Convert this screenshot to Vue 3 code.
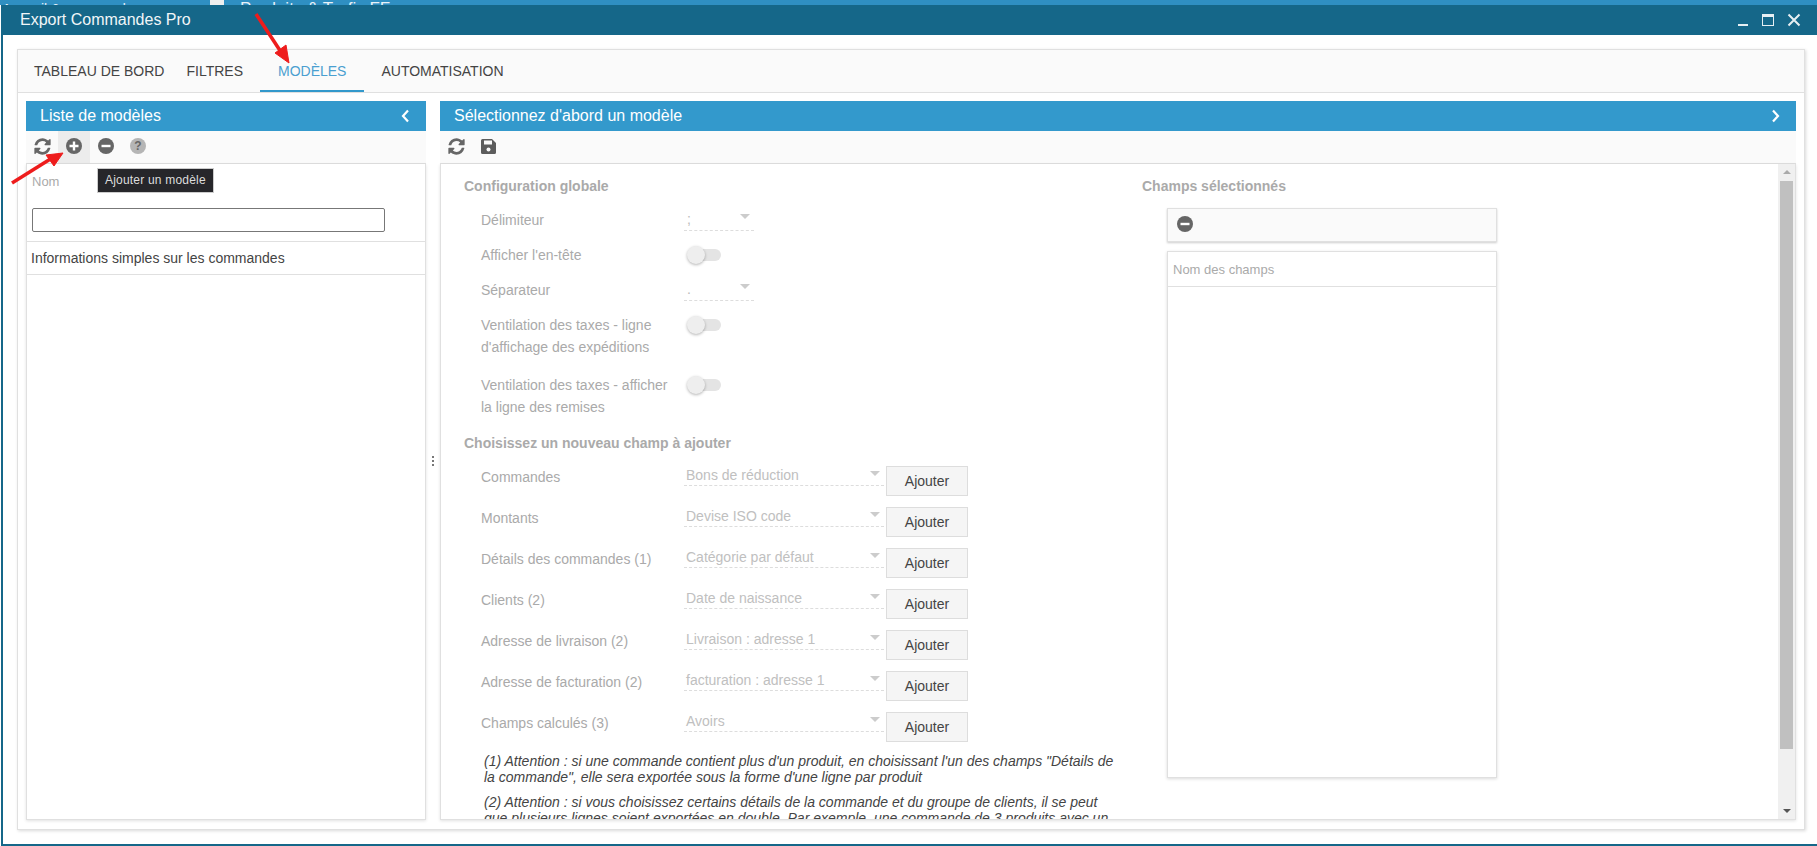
<script setup>
const fields = [
  { label: 'Commandes', value: 'Bons de réduction' },
  { label: 'Montants', value: 'Devise ISO code' },
  { label: 'Détails des commandes (1)', value: 'Catégorie par défaut' },
  { label: 'Clients (2)', value: 'Date de naissance' },
  { label: 'Adresse de livraison (2)', value: 'Livraison : adresse 1' },
  { label: 'Adresse de facturation (2)', value: 'facturation : adresse 1' },
  { label: 'Champs calculés (3)', value: 'Avoirs' },
]
const refreshPath = 'M1639 1056q0 5-1 7-64 268-268 434.5t-478 166.5q-146 0-282.500-55t-243.500-157l-129 129q-19 19-45 19t-45-19-19-45v-448q0-26 19-45t45-19h448q26 0 45 19t19 45-19 45l-137 137q71 66 161 102t187 36q134 0 250-65t186-179q11-17 53-117 8-23 30-23h192q13 0 22.500 9.500t9.500 22.500zm25-800v448q0 26-19 45t-45 19h-448q-26 0-45-19t-19-45 19-45l138-138q-148-137-349-137-134 0-250 65t-186 179q-11 17-53 117-8 23-30 23h-199q-13 0-22.500-9.500t-9.500-22.500v-7q65-268 270-434.500t480-166.500q146 0 284 55.500t245 156.500l130-129q19-19 45-19t45 19 19 45z'
</script>

<template>
  <div class="screen">
    <div class="backdrop">
      <span class="back-text first">Accueil &amp; commandes</span>
      <span class="back-tab"></span>
      <span class="back-text second">Produits &amp; Trafic FF</span>
    </div>
    <div class="window">
      <header class="titlebar">
        <span class="win-title">Export Commandes Pro</span>
        <div class="win-controls">
          <svg width="12" height="14" viewBox="0 0 12 14"><rect x="1" y="11" width="10" height="2" fill="#e6eff3" /></svg>
          <svg width="14" height="14" viewBox="0 0 14 14"><rect x="1.500" y="1.500" width="11" height="11" fill="none" stroke="#e6eff3" /><rect x="1" y="1" width="12" height="3" fill="#e6eff3" /></svg>
          <svg width="14" height="14" viewBox="0 0 14 14"><path d="M1.500 1.500 12.500 12.500M12.500 1.500 1.500 12.500" stroke="#e6eff3" stroke-width="2" /></svg>
        </div>
      </header>

      <div class="win-body">
        <div class="outer">
          <nav class="tabs">
            <a class="tab first-tab">Tableau de bord</a>
            <a class="tab second-tab">Filtres</a>
            <a class="tab active">Modèles</a>
            <a class="tab">Automatisation</a>
          </nav>

          <div class="panels">
            <section class="panel left">
              <div class="panel-head">
                <span>Liste de modèles</span>
                <svg class="chev" width="9" height="14" viewBox="0 0 9 14"><path d="M7 1.500 2 7l5 5.500" fill="none" stroke="#fff" stroke-width="2.200" /></svg>
              </div>
              <div class="toolbar">
                <button class="tool">
                  <svg width="19" height="19" viewBox="0 0 1792 1792"><path :d="refreshPath" fill="#666" /></svg>
                </button>
                <button class="tool hovered">
                  <svg width="16" height="16" viewBox="0 0 16 16"><circle cx="8" cy="8" r="8" fill="#666" /><path d="M8 3.500v9M3.500 8h9" stroke="#fff" stroke-width="2.400" /></svg>
                </button>
                <button class="tool">
                  <svg width="16" height="16" viewBox="0 0 16 16"><circle cx="8" cy="8" r="8" fill="#666" /><path d="M3.500 8h9" stroke="#fff" stroke-width="2.400" /></svg>
                </button>
                <button class="tool">
                  <span class="help">?</span>
                </button>
              </div>
              <div class="list-body">
                <div class="list-filter">
                  <div class="list-label">Nom</div>
                  <div class="fake-input"></div>
                </div>
                <div class="list-row">Informations simples sur les commandes</div>
              </div>
              <div class="tooltip">Ajouter un modèle</div>
            </section>

            <div class="gutter"><i></i><i></i><i></i></div>

            <section class="panel right">
              <div class="panel-head">
                <span>Sélectionnez d'abord un modèle</span>
                <svg class="chev" width="9" height="14" viewBox="0 0 9 14"><path d="M2 1.500 7 7l-5 5.500" fill="none" stroke="#fff" stroke-width="2.200" /></svg>
              </div>
              <div class="toolbar">
                <button class="tool">
                  <svg width="19" height="19" viewBox="0 0 1792 1792"><path :d="refreshPath" fill="#666" /></svg>
                </button>
                <button class="tool">
                  <svg width="15" height="15" viewBox="0 0 15 15"><path d="M1.500 0H11l4 4v9.500a1.500 1.500 0 0 1-1.500 1.500h-12A1.500 1.500 0 0 1 0 13.500v-12A1.500 1.500 0 0 1 1.500 0z" fill="#5c5c5c" /><rect x="3" y="1.500" width="8" height="4" fill="#fafafa" /><circle cx="7.500" cy="10.500" r="2" fill="#fafafa" /></svg>
                </button>
              </div>
              <div class="content">
                <div class="scroll-area">
                  <div class="form-col">
                    <h3>Configuration globale</h3>
                    <div class="cfg-row">
                      <label>Délimiteur</label>
                      <div class="mini-select"><span>;</span><b class="caret"></b></div>
                    </div>
                    <div class="cfg-row">
                      <label>Afficher l'en-tête</label>
                      <div class="toggle"><i></i></div>
                    </div>
                    <div class="cfg-row">
                      <label>Séparateur</label>
                      <div class="mini-select"><span>.</span><b class="caret"></b></div>
                    </div>
                    <div class="cfg-row tall">
                      <label>Ventilation des taxes - ligne d'affichage des expéditions</label>
                      <div class="toggle"><i></i></div>
                    </div>
                    <div class="cfg-row tall">
                      <label>Ventilation des taxes - afficher la ligne des remises</label>
                      <div class="toggle"><i></i></div>
                    </div>

                    <h3 class="second-head">Choisissez un nouveau champ à ajouter</h3>
                    <div v-for="f in fields" :key="f.label" class="field-row">
                      <label>{{ f.label }}</label>
                      <div class="wide-select"><span>{{ f.value }}</span><b class="caret"></b></div>
                      <button class="add">Ajouter</button>
                    </div>

                    <p class="note first-note">(1) Attention : si une commande contient plus d'un produit, en choisissant l'un des champs "Détails de la commande", elle sera exportée sous la forme d'une ligne par produit</p>
                    <p class="note">(2) Attention : si vous choisissez certains détails de la commande et du groupe de clients, il se peut que plusieurs lignes soient exportées en double. Par exemple, une commande de 3 produits avec un client appartenant à plusieurs groupes</p>
                  </div>

                  <div class="fields-col">
                    <h3>Champs sélectionnés</h3>
                    <div class="fields-tools">
                      <svg width="16" height="16" viewBox="0 0 16 16"><circle cx="8" cy="8" r="8" fill="#666" /><path d="M3.500 8h9" stroke="#fff" stroke-width="2.400" /></svg>
                    </div>
                    <div class="fields-grid">
                      <div class="fields-head">Nom des champs</div>
                    </div>
                  </div>
                </div>
                <div class="scrollbar">
                  <b class="sb-up"></b>
                  <div class="sb-thumb"></div>
                  <b class="sb-down"></b>
                </div>
              </div>
            </section>
          </div>
        </div>
      </div>
    </div>

    <svg class="annotations" width="1817" height="846" viewBox="0 0 1817 846">
      <path d="M256 14 281 52" stroke="#ee1c1c" stroke-width="3.500" />
      <path d="M275 53 289 63 286 45z" fill="#ee1c1c" stroke="#ee1c1c" stroke-width="1" />
      <path d="M12 183 52 158" stroke="#ee1c1c" stroke-width="3.500" />
      <path d="M63 153 46 155 54 166z" fill="#ee1c1c" stroke="#ee1c1c" stroke-width="1" />
    </svg>
  </div>
</template>

<style>
html, body { margin: 0; overflow: hidden; background: #fff; }
</style>

<style scoped>
.screen {
  position: relative;
  width: 1817px;
  height: 846px;
  overflow: hidden;
  font-family: "Liberation Sans", Arial, sans-serif;
  font-size: 14px;
  color: #444;
  background: #fff;
}
.backdrop {
  height: 5px;
  background: #2f8fc2;
  display: flex;
  overflow: hidden;
  color: #e8f2f8;
  line-height: 16px;
}
.back-text { margin-top: 1px; white-space: nowrap; }
.back-text.first { margin-left: 2px; width: 208px; font-size: 14px; }
.back-tab { width: 14px; background: #eeeeee; }
.back-text.second { margin-left: 16px; font-size: 17px; }

.window {
  height: 841px;
  margin-left: 1px;
  border-left: 2px solid #156789;
  border-bottom: 2px solid #156789;
  box-sizing: border-box;
  display: flex;
  flex-direction: column;
  background: #fff;
}
.titlebar {
  height: 30px;
  margin-left: -2px;
  flex: none;
  background: #156789;
  display: flex;
  align-items: center;
  justify-content: space-between;
  color: #f1f6f8;
  font-size: 16px;
  padding: 0 16px 0 19px;
}
.win-controls { display: flex; align-items: center; gap: 12px; }
.win-controls svg { display: block; }

.win-body { flex: 1; min-height: 0; padding: 14px 12px 14px 14px; display: flex; }
.outer {
  flex: 1;
  min-width: 0;
  border: 1px solid #e0e0e0;
  box-shadow: 1px 1px 3px rgba(0,0,0,.15);
  display: flex;
  flex-direction: column;
}
.tabs {
  height: 42px;
  flex: none;
  background: #fafafa;
  border-bottom: 1px solid #e0e0e0;
  display: flex;
  font-size: 14px;
  text-transform: uppercase;
}
.tab {
  padding: 0 18px;
  line-height: 42px;
  height: 42px;
  box-sizing: border-box;
  color: #444;
  white-space: nowrap;
}
.tab.first-tab { padding: 0 4px 0 16px; }
.tab.second-tab { padding-right: 17px; }
.tab.active { color: #4a9fd0; border-bottom: 2px solid #3399cc; margin-right: -1px; }

.panels { flex: 1; min-height: 0; display: flex; padding: 8px 8px 9px; }
.panel {
  position: relative;
  display: flex;
  flex-direction: column;
  min-height: 0;
}
.panel.left { width: 400px; flex: none; }
.panel.right { flex: 1; min-width: 0; }
.gutter {
  width: 14px;
  flex: none;
  display: flex;
  flex-direction: column;
  align-items: center;
  justify-content: center;
  gap: 2px;
}
.gutter i { width: 2px; height: 2px; background: #777; }
.panel-head {
  height: 30px;
  flex: none;
  background: #3399cc;
  color: #fff;
  font-size: 16px;
  display: flex;
  align-items: center;
  justify-content: space-between;
  padding: 0 16px 0 14px;
}
.chev { display: block; }
.toolbar {
  height: 32px;
  flex: none;
  background: #fafafa;
  border-bottom: 1px solid #e0e0e0;
  display: flex;
}
.tool {
  width: 32px;
  height: 32px;
  padding: 0 0 2px;
  border: 0;
  background: transparent;
  display: flex;
  align-items: center;
  justify-content: center;
}
.tool.hovered { background: #ececec; }
.help {
  width: 16px;
  height: 16px;
  border-radius: 50%;
  background: #b5b5b5;
  color: #666;
  font-size: 12px;
  font-weight: bold;
  line-height: 16px;
  text-align: center;
  font-family: "Liberation Sans", Arial, sans-serif;
}
.list-body {
  flex: 1;
  border: 1px solid #e0e0e0;
  border-top: 0;
  box-shadow: 0 1px 3px rgba(0,0,0,.12);
}
.list-filter {
  height: 78px;
  box-sizing: border-box;
  padding: 10px 5px 0;
  border-bottom: 1px solid #e0e0e0;
}
.list-label { color: #aaa; line-height: 16px; font-size: 13px; }
.fake-input {
  width: 351px;
  height: 22px;
  margin-top: 18px;
  border: 1px solid #777;
  border-radius: 2px;
  background: #fff;
}
.list-row {
  height: 32px;
  line-height: 33px;
  padding-left: 4px;
  font-size: 14px;
  color: #444;
  border-bottom: 1px solid #e0e0e0;
}
.tooltip {
  position: absolute;
  left: 71px;
  top: 67px;
  height: 23px;
  line-height: 23px;
  padding: 0 7px;
  background: #26262a;
  border: 1px solid #ccc;
  color: #ddd;
  font-size: 12px;
  letter-spacing: .2px;
  white-space: nowrap;
}

.content {
  flex: 1;
  min-height: 0;
  display: flex;
  border: 1px solid #e0e0e0;
  border-top: 0;
  box-shadow: 0 1px 3px rgba(0,0,0,.12);
}
.scroll-area { flex: 1; min-width: 0; display: flex; overflow: hidden; background: #fff; }
.form-col {
  width: 701px;
  flex: none;
  box-sizing: border-box;
  padding: 14px 25px 0 23px;
}
h3 {
  margin: 0;
  font-size: 14px;
  line-height: 16px;
  font-weight: bold;
  color: #aaa;
}
.cfg-row {
  display: flex;
  align-items: flex-start;
  margin: 15px 0 -2px 17px;
  color: #aaa;
}
.cfg-row label { width: 203px; padding-right: 8px; box-sizing: border-box; line-height: 22px; flex: none; }
.cfg-row.tall { margin-bottom: 0; }
.cfg-row.tall + .cfg-row.tall { margin-top: 16px; }
.mini-select {
  position: relative;
  width: 70px;
  height: 22px;
  box-sizing: border-box;
  border-bottom: 1px dashed #ddd;
  padding-left: 3px;
  line-height: 20px;
  color: #bbb;
}
.caret {
  position: absolute;
  right: 4px;
  top: 5px;
  width: 0;
  height: 0;
  border-left: 5px solid transparent;
  border-right: 5px solid transparent;
  border-top: 5px solid #ccc;
}
.toggle {
  position: relative;
  width: 33px;
  height: 12px;
  margin: 5px 0 0 4px;
  border-radius: 6px;
  background: #e4e4e4;
}
.toggle i {
  position: absolute;
  left: -1px;
  top: -3px;
  width: 18px;
  height: 18px;
  border-radius: 50%;
  background: #eeeeee;
  box-shadow: 0 1px 3px rgba(0,0,0,.3);
}
.second-head { margin-top: 17px; }
.field-row {
  display: flex;
  align-items: flex-start;
  height: 30px;
  margin: 11px 0 0 17px;
  color: #aaa;
}
.second-head + .field-row { margin-top: 15px; }
.field-row label { width: 203px; flex: none; line-height: 22px; }
.wide-select {
  position: relative;
  width: 200px;
  height: 20px;
  flex: none;
  box-sizing: border-box;
  border-bottom: 1px dashed #ddd;
  padding-left: 2px;
  line-height: 18px;
  color: #c0c0c0;
}
.add {
  width: 82px;
  height: 30px;
  flex: none;
  margin-left: 2px;
  padding: 0;
  border: 1px solid #ddd;
  background: #f5f5f5;
  color: #444;
  font: 14px "Liberation Sans", Arial, sans-serif;
}
.note {
  margin: 9px 0 0 20px;
  font-style: italic;
  line-height: 16px;
  color: #444;
}
.note.first-note { margin-top: 11px; }

.fields-col { flex: 1; min-width: 0; padding-top: 14px; }
.fields-tools {
  margin: 14px 0 0 25px;
  border: 1px solid #e0e0e0;
  background: #fafafa;
  box-shadow: 0 1px 2px rgba(0,0,0,.2);
  display: flex;
  align-items: center;
  padding: 0 0 2px 9px;
  box-sizing: border-box;
  height: 34px;
  width: 330px;
}
.fields-grid {
  width: 328px;
  height: 525px;
  margin: 9px 0 0 25px;
  border: 1px solid #e0e0e0;
  box-shadow: 0 1px 3px rgba(0,0,0,.15);
}
.fields-head {
  height: 34px;
  line-height: 36px;
  padding-left: 5px;
  font-size: 13px;
  color: #aaa;
  border-bottom: 1px solid #e0e0e0;
}
.scrollbar {
  position: relative;
  width: 17px;
  flex: none;
  background: #f0f0f0;
}
.sb-thumb {
  position: absolute;
  left: 2px;
  right: 2px;
  top: 17px;
  height: 568px;
  background: #c0c0c0;
}
.sb-up, .sb-down {
  position: absolute;
  left: 5px;
  width: 0;
  height: 0;
  border-left: 4px solid transparent;
  border-right: 4px solid transparent;
}
.sb-up { top: 6px; border-bottom: 4px solid #aaa; }
.sb-down { bottom: 6px; border-top: 4px solid #555; }
.annotations { position: absolute; left: 0; top: 0; pointer-events: none; }
</style>
